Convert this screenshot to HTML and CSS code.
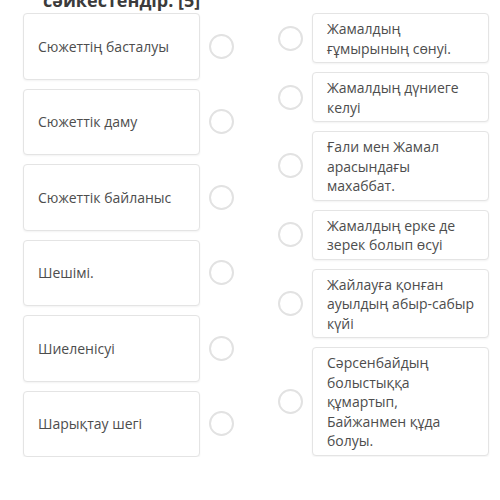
FILE: index.html
```html
<!DOCTYPE html>
<html lang="en">
<head>
    <meta charset="UTF-8">
    <meta name="viewport" content="width=device-width, initial-scale=1.0">
    <title>Сәйкестендір</title>
    <link rel="stylesheet" href="styles.css">
</head>
<body>
    <h1 class="question">сәйкестендір. [5]</h1>

    <div class="match">
        <div class="column column-left">
            <div class="row">
                <div class="card card-fixed">Сюжеттің басталуы</div>
                <span class="dot"></span>
            </div>
            <div class="row">
                <div class="card card-fixed">Сюжеттік даму</div>
                <span class="dot"></span>
            </div>
            <div class="row">
                <div class="card card-fixed">Сюжеттік байланыс</div>
                <span class="dot"></span>
            </div>
            <div class="row">
                <div class="card card-fixed">Шешімі.</div>
                <span class="dot"></span>
            </div>
            <div class="row">
                <div class="card card-fixed">Шиеленісуі</div>
                <span class="dot"></span>
            </div>
            <div class="row">
                <div class="card card-fixed">Шарықтау шегі</div>
                <span class="dot"></span>
            </div>
        </div>

        <div class="column column-right">
            <div class="row">
                <span class="dot"></span>
                <div class="card card-text">Жамалдың ғұмырының сөнуі.</div>
            </div>
            <div class="row">
                <span class="dot"></span>
                <div class="card card-text">Жамалдың дүниеге келуі</div>
            </div>
            <div class="row">
                <span class="dot"></span>
                <div class="card card-text">Ғали мен Жамал арасындағы махаббат.</div>
            </div>
            <div class="row">
                <span class="dot"></span>
                <div class="card card-text">Жамалдың ерке де зерек болып өсуі</div>
            </div>
            <div class="row">
                <span class="dot"></span>
                <div class="card card-text">Жайлауға қонған ауылдың абыр-сабыр күйі</div>
            </div>
            <div class="row">
                <span class="dot"></span>
                <div class="card card-text">Сәрсенбайдың болыстыққа құмартып, Байжанмен құда болуы.</div>
            </div>
        </div>
    </div>
</body>
</html>
```

FILE: styles.css
```css
body {
    font-family: "Open Sans", "Noto Sans", sans-serif;
    background-color: #ffffff;
    color: #4d4d4d;
    margin: 0;
    padding: 0;
    overflow: hidden;
}

.question {
    font-size: 18px;
    font-weight: bold;
    color: #3b3b3b;
    line-height: 22px;
    height: 22px;
    margin: -11px 0 2px 43px;
}

.match {
    display: flex;
    gap: 44px;
    padding-left: 23px;
}

.column {
    display: flex;
    flex-direction: column;
    gap: 9px;
}

.row {
    display: flex;
    align-items: center;
    gap: 9px;
}

.card {
    background-color: #ffffff;
    border: 1px solid #e4e4e4;
    border-radius: 4px;
    box-shadow: 0 1px 2px rgba(0, 0, 0, 0.05);
    font-size: 14px;
    box-sizing: border-box;
    width: 177px;
}

.card-fixed {
    height: 66.5px;
    display: flex;
    align-items: center;
    padding: 0 14px;
}

.card-text {
    line-height: 19.5px;
    padding: 5px 10px 4px 14px;
}

.dot {
    width: 25px;
    height: 25px;
    box-sizing: border-box;
    border: 2px solid #e2e2e2;
    border-radius: 50%;
    flex-shrink: 0;
}
```
